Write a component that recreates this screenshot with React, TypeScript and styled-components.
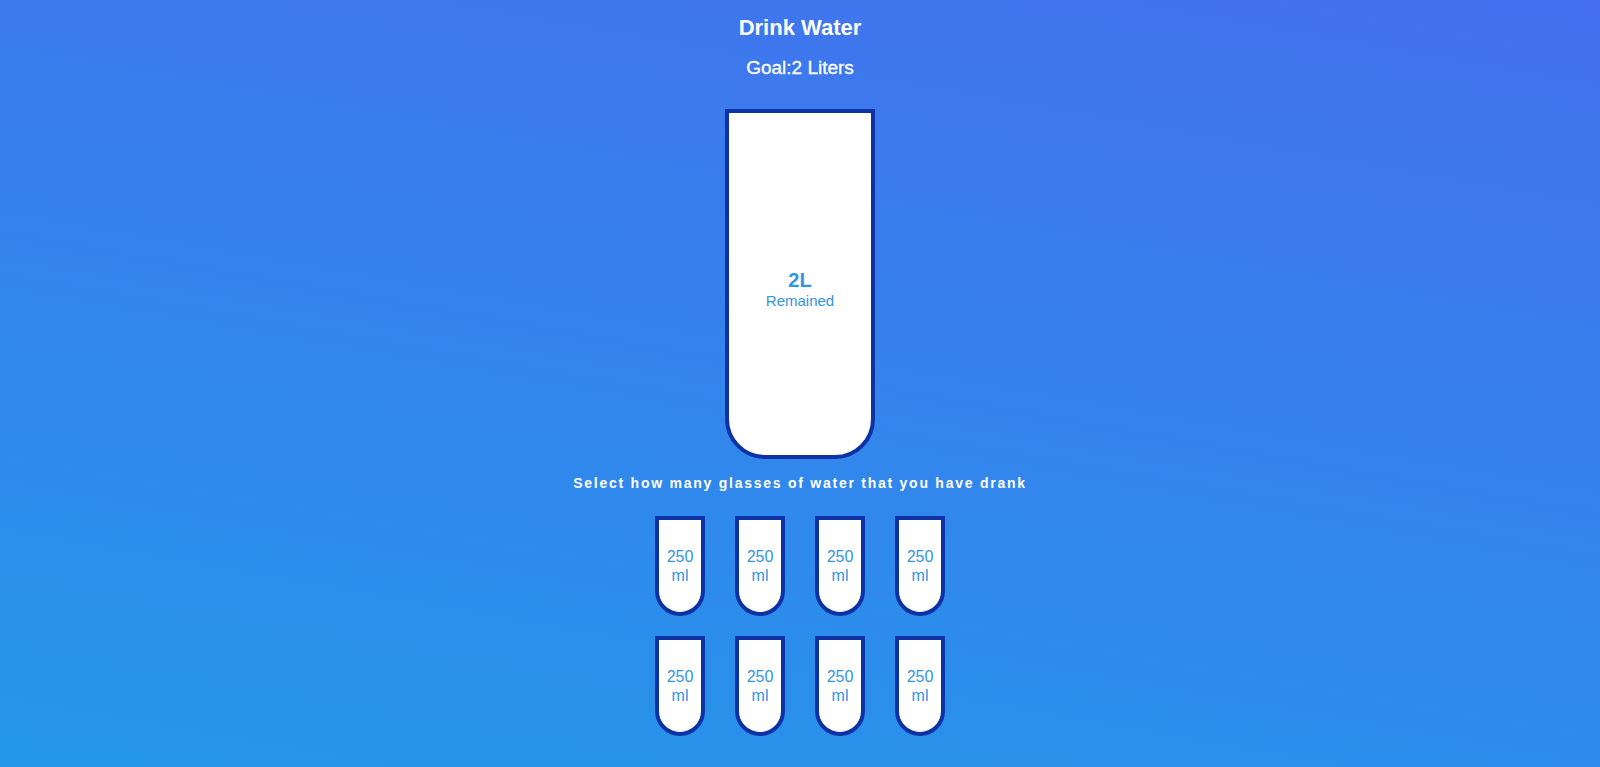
import React from 'react';
import styled, { createGlobalStyle } from 'styled-components';

const GlobalStyle = createGlobalStyle`
  * {
    box-sizing: border-box;
  }

  body {
    margin: 0;
    font-family: 'Liberation Sans', Arial, sans-serif;
  }
`;

const Page = styled.div`
  min-height: 100vh;
  display: flex;
  flex-direction: column;
  align-items: center;
  padding-top: 15px;
  color: #fff;
  background: linear-gradient(190deg, #4470ee, #2497ea);
`;

const Title = styled.h1`
  margin: 0;
  font-size: 22px;
  line-height: 26px;
  font-weight: bold;
`;

const Goal = styled.h3`
  margin: 16px 0 0;
  font-size: 19px;
  line-height: 22px;
  font-weight: 400;
  -webkit-text-stroke: 0.3px #fff;
`;

const Cup = styled.div`
  width: 150px;
  height: 350px;
  margin-top: 30px;
  background-color: #fff;
  border: 4px solid #0d32a6;
  border-radius: 0 0 40px 40px;
  color: #3494e4;
  display: flex;
  flex-direction: column;
  overflow: hidden;
`;

const Remained = styled.div`
  flex: 1;
  display: flex;
  flex-direction: column;
  align-items: center;
  justify-content: center;
  text-align: center;
  padding-top: 10px;
`;

const Amount = styled.span`
  font-size: 20px;
  font-weight: bold;
  line-height: 23px;
`;

const Caption = styled.small`
  font-size: 15px;
  line-height: 17px;
`;

const Hint = styled.p`
  margin: 16px 0 0;
  font-size: 14px;
  line-height: 16px;
  font-weight: bold;
  letter-spacing: 1.75px;
  text-align: center;
`;

const Cups = styled.div`
  margin-top: 25px;
  display: grid;
  grid-template-columns: repeat(4, 50px);
  column-gap: 30px;
  row-gap: 20px;
`;

const SmallCup = styled.div`
  width: 50px;
  height: 100px;
  background-color: #fff;
  border: 4px solid #0d32a6;
  border-radius: 0 0 25px 25px;
  color: #3494e4;
  font-size: 16px;
  line-height: 19px;
  display: flex;
  align-items: center;
  justify-content: center;
  text-align: center;
  cursor: pointer;
`;

const glasses = Array.from({ length: 8 }, (_, i) => i);

const App: React.FC = () => {
  return (
    <>
      <GlobalStyle />
      <Page>
        <Title>Drink Water</Title>
        <Goal>Goal:2 Liters</Goal>
        <Cup>
          <Remained>
            <Amount>2L</Amount>
            <Caption>Remained</Caption>
          </Remained>
        </Cup>
        <Hint>Select how many glasses of water that you have drank</Hint>
        <Cups>
          {glasses.map((i) => (
            <SmallCup key={i}>250 ml</SmallCup>
          ))}
        </Cups>
      </Page>
    </>
  );
};

export default App;
